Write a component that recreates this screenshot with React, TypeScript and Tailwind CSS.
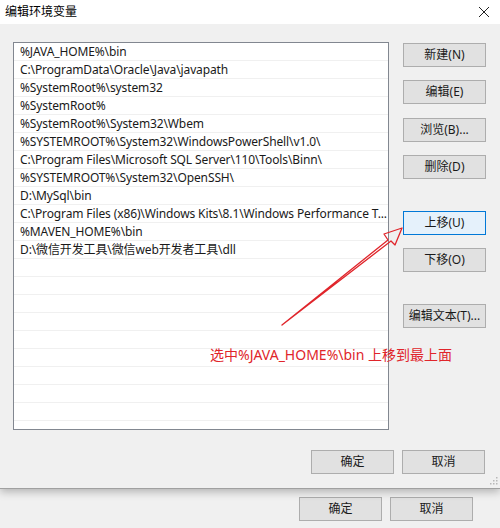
import React from "react";

const paths = [
  "%JAVA_HOME%\\bin",
  "C:\\ProgramData\\Oracle\\Java\\javapath",
  "%SystemRoot%\\system32",
  "%SystemRoot%",
  "%SystemRoot%\\System32\\Wbem",
  "%SYSTEMROOT%\\System32\\WindowsPowerShell\\v1.0\\",
  "C:\\Program Files\\Microsoft SQL Server\\110\\Tools\\Binn\\",
  "%SYSTEMROOT%\\System32\\OpenSSH\\",
  "D:\\MySql\\bin",
  "C:\\Program Files (x86)\\Windows Kits\\8.1\\Windows Performance T...",
  "%MAVEN_HOME%\\bin",
  "D:\\微信开发工具\\微信web开发者工具\\dll",
];

function Btn({ label, active = false, className = "" }: { label: string; active?: boolean; className?: string }) {
  return (
    <div
      className={`h-[24px] w-[83px] flex items-center justify-center border text-[12px] text-[#1a1a1a] ${
        active ? "bg-[#e5f1fb] border-[#0078d7]" : "bg-[#e1e1e1] border-[#adadad]"
      } ${className}`}
    >
      {label}
    </div>
  );
}

export default function App() {
  const empty = Array.from({ length: 10 });
  return (
    <div
      className="relative w-[500px] h-[528px] overflow-hidden bg-[#f0f0f0]"
      style={{ fontFamily: '"Noto Sans", "Noto Sans CJK SC", sans-serif' }}
    >
      {/* dialog */}
      <div className="h-[489px] flex flex-col border-b border-[#a0a0a0] shadow-[0_3px_8px_rgba(0,0,0,0.25)] bg-[#f0f0f0] relative z-10">
        <div className="h-[24px] bg-white flex items-center justify-between pl-[5px] pr-[10px]">
          <span className="text-[12px] text-black">编辑环境变量</span>
          <svg width="12" height="12" viewBox="0 0 12 12">
            <path d="M1 1L11 11M11 1L1 11" stroke="#222" strokeWidth="1" />
          </svg>
        </div>

        <div className="flex-1 flex flex-col pl-[13px] pr-[14px] pt-[18px]">
          <div className="flex">
            <div className="w-[376px] h-[388px] bg-white border border-[#828790] overflow-hidden">
              {paths.map((p) => (
                <div
                  key={p}
                  className="h-[18px] flex items-center pl-[6px] border-b border-[#f0f0f0] text-[12px] tracking-[-0.12px] text-[#1a1a1a] whitespace-nowrap"
                >
                  {p}
                </div>
              ))}
              {empty.map((_, i) => (
                <div key={i} className="h-[18px] border-b border-[#f0f0f0]" />
              ))}
            </div>

            <div className="ml-[14px] mt-[1px] flex flex-col">
              <Btn label="新建(N)" />
              <Btn label="编辑(E)" className="mt-[13px]" />
              <Btn label="浏览(B)..." className="mt-[14px]" />
              <Btn label="删除(D)" className="mt-[13px]" />
              <Btn label="上移(U)" active className="mt-[32px]" />
              <Btn label="下移(O)" className="mt-[13px]" />
              <Btn label="编辑文本(T)..." className="mt-[32px]" />
            </div>
          </div>

          <div className="mt-[20px] flex justify-end gap-[8px] pr-[1px]">
            <Btn label="确定" />
            <Btn label="取消" />
          </div>
        </div>

        {/* resize grip */}
        <svg className="absolute right-[2px] bottom-[3px]" width="8" height="8" viewBox="0 0 8 8">
          <rect x="6" y="0" width="1.5" height="1.5" fill="#b8b8b8" />
          <rect x="3" y="3" width="1.5" height="1.5" fill="#b8b8b8" />
          <rect x="6" y="3" width="1.5" height="1.5" fill="#b8b8b8" />
          <rect x="0" y="6" width="1.5" height="1.5" fill="#b8b8b8" />
          <rect x="3" y="6" width="1.5" height="1.5" fill="#b8b8b8" />
          <rect x="6" y="6" width="1.5" height="1.5" fill="#b8b8b8" />
        </svg>
      </div>

      {/* parent window buttons */}
      <div className="mt-[8px] flex justify-end gap-[8px] pr-[27px]">
        <Btn label="确定" />
        <Btn label="取消" />
      </div>

      {/* annotation */}
      <svg className="absolute left-0 top-0 z-20 pointer-events-none" width="500" height="528">
        <path
          d="M282 325 L388 240 L384 234 L402 228 L395 245 L391 241 Z"
          fill="none"
          stroke="#e0252b"
          strokeWidth="1.3"
          strokeLinejoin="round"
        />
      </svg>
      <div className="absolute left-[210px] top-[344px] z-20 text-[14px] text-[#e0252b] whitespace-nowrap">
        选中%JAVA_HOME%\bin 上移到最上面
      </div>
    </div>
  );
}
